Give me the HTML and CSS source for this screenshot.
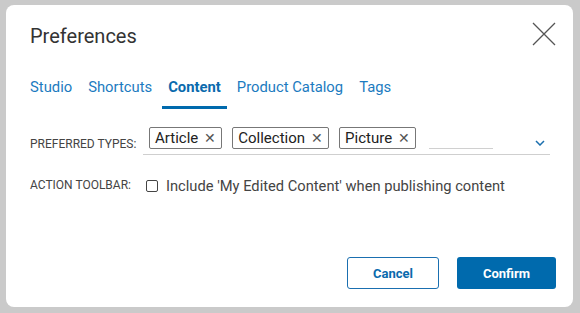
FILE: index.html
```html
<!DOCTYPE html>
<html lang="en">
<head>
    <title>Preferences</title>
    <link rel="stylesheet" href="styles.css">
</head>
<body>
    <div class="dialog">
        <div class="dialog-header">
            <h1>Preferences</h1>
            <button class="close-btn" aria-label="Close">
                <svg width="24" height="24" viewBox="0 0 24 24"><path d="M1 1L23 23M23 1L1 23" stroke="#555" stroke-width="1.3" fill="none"/></svg>
            </button>
        </div>

        <div class="tabs">
            <a class="tab">Studio</a>
            <a class="tab">Shortcuts</a>
            <a class="tab active">Content</a>
            <a class="tab">Product Catalog</a>
            <a class="tab">Tags</a>
        </div>

        <div class="form-row">
            <label class="field-label">Preferred types:</label>
            <div class="tag-field">
                <span class="chip">Article <span class="chip-x">&#x2715;</span></span>
                <span class="chip">Collection <span class="chip-x">&#x2715;</span></span>
                <span class="chip">Picture <span class="chip-x">&#x2715;</span></span>
                <span class="tag-input"></span>
                <svg class="chevron" width="10" height="6" viewBox="0 0 10 6"><path d="M1 1L5 5L9 1" stroke="#1b6fae" stroke-width="1.5" fill="none"/></svg>
            </div>
        </div>

        <div class="form-row toolbar-row">
            <label class="field-label">Action toolbar:</label>
            <label class="check">
                <span class="box"></span>
                Include 'My Edited Content' when publishing content
            </label>
        </div>

        <div class="dialog-footer">
            <button class="btn btn-outline">Cancel</button>
            <button class="btn btn-primary">Confirm</button>
        </div>
    </div>
</body>
</html>
```

FILE: styles.css
```css
:root {
    --bg-color: #cacaca;
    --text-color: #333;
    --primary-color: #006aad;
    --link-color: #1c7bc0;
}

body {
    background-color: var(--bg-color);
    color: var(--text-color);
    font-family: Roboto, 'Liberation Sans', sans-serif;
    margin: 0;
    padding: 5px 7px 6px 6px;
}

.dialog {
    background: #fff;
    border-radius: 8px;
    height: 302px;
    box-sizing: border-box;
    padding: 0 24px 0 24px;
    display: flex;
    flex-direction: column;
}

.dialog-header {
    display: flex;
    justify-content: space-between;
    align-items: flex-start;
    height: 59px;
}

.dialog-header h1 {
    font-size: 20px;
    font-weight: 400;
    color: #333;
    margin: 19px 0 0 0;
    line-height: 24px;
}

.close-btn {
    background: none;
    border: none;
    padding: 0;
    margin: 17px -7px 0 0;
    cursor: pointer;
    width: 24px;
    height: 24px;
}

.tabs {
    display: flex;
    height: 45px;
}

.tab {
    font-size: 14.8px;
    color: var(--link-color);
    padding: 14px 6px 0 6px;
    margin-right: 4px;
    line-height: 18px;
    box-sizing: border-box;
    height: 45px;
    cursor: pointer;
}

.tab:first-child {
    padding-left: 0;
}

.tab.active {
    font-weight: 700;
    color: #0a6aad;
    border-bottom: 3px solid var(--primary-color);
}

.form-row {
    display: flex;
    align-items: flex-start;
}

.field-label {
    font-size: 12px;
    text-transform: uppercase;
    color: #444;
    width: 113px;
    flex-shrink: 0;
    padding-top: 28px;
}

.tag-field {
    flex: 1;
    margin-right: -1px;
    display: flex;
    align-items: center;
    gap: 10px;
    padding: 18px 0 5px 6px;
    border-bottom: 1px solid #cfcfcf;
}

.chip {
    display: inline-flex;
    align-items: center;
    border: 1px solid #777;
    border-radius: 2px;
    font-size: 15px;
    color: #222;
    height: 20px;
    padding: 0 5px;
    gap: 6px;
}

.chip-x {
    font-size: 14px;
    color: #555;
}

.tag-input {
    width: 64px;
    margin-left: 3px;
    border-bottom: 1px solid #d0d0d0;
    height: 14px;
    align-self: flex-end;
}

.chevron {
    margin-left: auto;
    margin-right: 5px;
    margin-top: 10px;
}

.toolbar-row .field-label {
    padding-top: 23px;
}

.check {
    display: flex;
    align-items: center;
    font-size: 14.7px;
    color: #444;
    gap: 8px;
    padding: 22px 0 0 3px;
}

.box {
    width: 10px;
    height: 10px;
    border: 1px solid #444;
    border-radius: 2px;
}

.dialog-footer {
    margin-top: auto;
    display: flex;
    justify-content: flex-end;
    gap: 18px;
    padding-bottom: 18px;
}

.btn {
    font-family: Roboto, 'Liberation Sans', sans-serif;
    font-size: 13px;
    font-weight: 700;
    height: 32px;
    border-radius: 3px;
    cursor: pointer;
}

.btn-outline {
    background: #fff;
    color: #0a6aad;
    border: 1px solid #1a6fb0;
    width: 92px;
}

.btn-primary {
    background: var(--primary-color);
    color: #fff;
    border: none;
    width: 99px;
    margin-right: -7px;
}
```
